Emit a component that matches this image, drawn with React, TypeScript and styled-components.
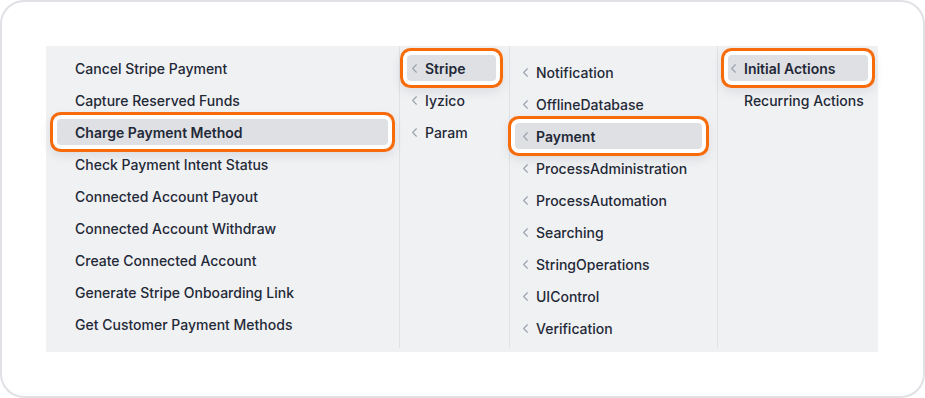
import { FC } from "react";
import styled, { createGlobalStyle } from "styled-components";
import { ChevronLeft } from "lucide-react";

type Item = {
  label: string;
  selected?: boolean;
};

type ChevronMode = "all" | "selected" | "none";

type ColumnSpec = {
  width: number;
  padLeft: number;
  padRight: number;
  padTop: number;
  itemPad: number;
  chevron: ChevronMode;
  items: Item[];
};

const columns: ColumnSpec[] = [
  {
    width: 354,
    padLeft: 11,
    padRight: 11,
    padTop: 9,
    itemPad: 4,
    chevron: "none",
    items: [
      { label: "Cancel Stripe Payment" },
      { label: "Capture Reserved Funds" },
      { label: "Charge Payment Method", selected: true },
      { label: "Check Payment Intent Status" },
      { label: "Connected Account Payout" },
      { label: "Connected Account Withdraw" },
      { label: "Create Connected Account" },
      { label: "Generate Stripe Onboarding Link" },
      { label: "Get Customer Payment Methods" },
    ],
  },
  {
    width: 110,
    padLeft: 7,
    padRight: 13,
    padTop: 9,
    itemPad: 4,
    chevron: "all",
    items: [{ label: "Stripe", selected: true }, { label: "Iyzico" }, { label: "Param" }],
  },
  {
    width: 208,
    padLeft: 5,
    padRight: 15,
    padTop: 13,
    itemPad: 7,
    chevron: "all",
    items: [
      { label: "Notification" },
      { label: "OfflineDatabase" },
      { label: "Payment", selected: true },
      { label: "ProcessAdministration" },
      { label: "ProcessAutomation" },
      { label: "Searching" },
      { label: "StringOperations" },
      { label: "UIControl" },
      { label: "Verification" },
    ],
  },
  {
    width: 160,
    padLeft: 10,
    padRight: 10,
    padTop: 9,
    itemPad: 2,
    chevron: "selected",
    items: [{ label: "Initial Actions", selected: true }, { label: "Recurring Actions" }],
  },
];

const GlobalStyle = createGlobalStyle`
  html, body {
    margin: 0;
    padding: 0;
    background: #ffffff;
  }
  body {
    font-family: Inter, "Noto Sans", "Liberation Sans", sans-serif;
  }
`;

const showChevron = (mode: ChevronMode, item: Item) =>
  mode === "all" || (mode === "selected" && !!item.selected);

const MenuColumn: FC<{ spec: ColumnSpec; last: boolean }> = ({ spec, last }) => (
  <Column
    $width={spec.width}
    $padLeft={spec.padLeft}
    $padRight={spec.padRight}
    $padTop={spec.padTop}
    $last={last}
  >
    {spec.items.map((item) => (
      <MenuItem key={item.label} $selected={!!item.selected} $pad={spec.itemPad}>
        <ChevronSlot>
          {showChevron(spec.chevron, item) && <ChevronLeft size={15} strokeWidth={1.8} />}
        </ChevronSlot>
        {item.label}
      </MenuItem>
    ))}
  </Column>
);

export default function App() {
  return (
    <>
      <GlobalStyle />
      <Card>
        <Panel>
          {columns.map((spec, i) => (
            <MenuColumn key={i} spec={spec} last={i === columns.length - 1} />
          ))}
        </Panel>
      </Card>
    </>
  );
}

const Card = styled.div`
  box-sizing: border-box;
  width: 925px;
  height: 398px;
  border: 2px solid #dfe1e5;
  border-radius: 24px;
  padding: 44px;
  background: #ffffff;
`;

const Panel = styled.div`
  display: flex;
  align-items: flex-start;
  width: 832px;
  height: 306px;
  background: #f0f1f3;
`;

const Column = styled.div<{
  $width: number;
  $padLeft: number;
  $padRight: number;
  $padTop: number;
  $last: boolean;
}>`
  box-sizing: border-box;
  display: flex;
  flex-direction: column;
  gap: 6px;
  width: ${(p) => p.$width}px;
  height: 302px;
  padding: ${(p) => p.$padTop}px ${(p) => p.$padRight}px 0 ${(p) => p.$padLeft}px;
  border-right: ${(p) => (p.$last ? "none" : "1px solid #dfe1e4")};
`;

const MenuItem = styled.div<{ $selected: boolean; $pad: number }>`
  display: flex;
  align-items: center;
  height: 26px;
  padding-left: ${(p) => p.$pad}px;
  border-radius: 4px;
  font-size: 14px;
  font-weight: ${(p) => (p.$selected ? 600 : 500)};
  color: #1f2937;
  white-space: nowrap;
  background: ${(p) => (p.$selected ? "#dfe0e4" : "transparent")};
  box-shadow: ${(p) =>
    p.$selected
      ? "0 0 0 4px #ffffff, 0 0 0 7px #f76b0a, 0 4px 12px 6px rgba(15, 23, 42, 0.1)"
      : "none"};
`;

const ChevronSlot = styled.span`
  display: inline-flex;
  align-items: center;
  width: 14px;
  height: 26px;
  color: #9ca3af;

  svg {
    margin-left: -4px;
    flex-shrink: 0;
  }
`;
